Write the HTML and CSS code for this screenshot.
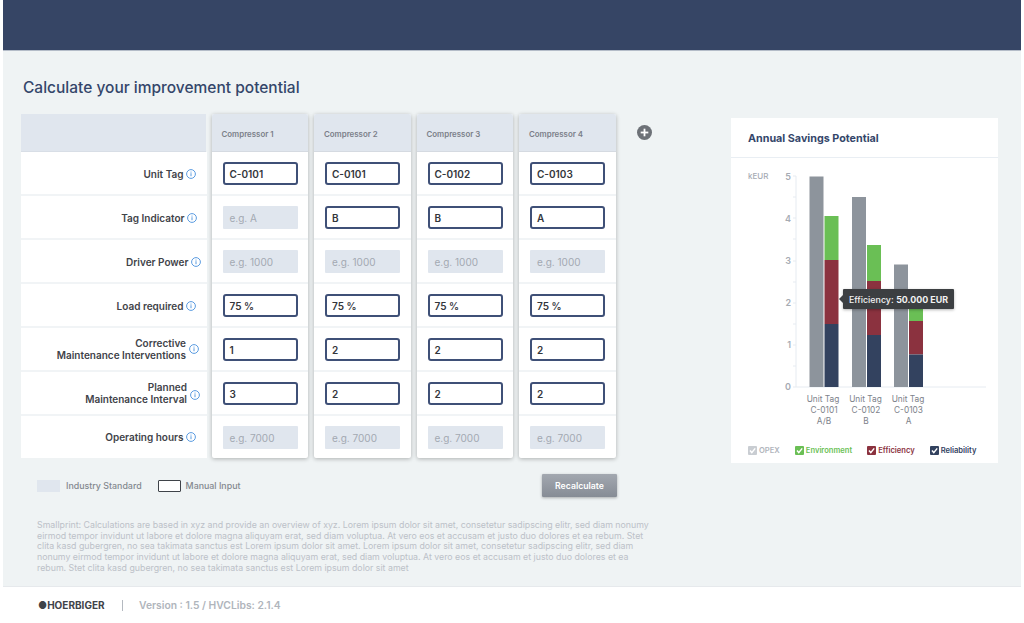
FILE: index.html
```html
<!DOCTYPE html>
<html lang="en">

<head>
  <meta charset="UTF-8">
  <title>Calculate your improvement potential</title>
  <link rel="stylesheet" href="styles.css">
</head>

<body>
  <svg class="defs" width="0" height="0">
    <symbol id="info" viewBox="0 0 10 10">
      <circle cx="5" cy="5" r="4.4" fill="none" stroke="#5a9be0" stroke-width="1" />
      <rect x="4.5" y="4.2" width="1" height="3" fill="#5a9be0" />
      <rect x="4.5" y="2.6" width="1" height="1" fill="#5a9be0" />
    </symbol>
    <symbol id="check" viewBox="0 0 9 9">
      <path d="M2 4.6 L3.8 6.6 L7.2 2.4" fill="none" stroke="#fff" stroke-width="1.5" />
    </symbol>
  </svg>

  <div class="app">
    <header class="topbar"></header>

    <main class="content">
      <h1>Calculate your improvement potential</h1>

      <div class="panels">
        <section class="calculator">
          <div class="table">
            <div class="labels">
              <div class="labels-head"></div>
              <div class="label-row"><span>Unit Tag</span><svg class="info"><use href="#info" /></svg></div>
              <div class="label-row"><span>Tag Indicator</span><svg class="info nudge-1"><use href="#info" /></svg></div>
              <div class="label-row"><span>Driver Power</span><svg class="info nudge-5"><use href="#info" /></svg></div>
              <div class="label-row"><span>Load required</span><svg class="info"><use href="#info" /></svg></div>
              <div class="label-row tall"><span>Corrective<br>Maintenance Interventions</span><svg class="info nudge-2"><use href="#info" /></svg></div>
              <div class="label-row tall"><span>Planned<br>Maintenance Interval</span><svg class="info nudge-3"><use href="#info" /></svg></div>
              <div class="label-row last"><span>Operating hours</span><svg class="info"><use href="#info" /></svg></div>
            </div>

            <div class="compressor">
              <div class="compressor-head">Compressor 1</div>
              <div class="cell"><div class="field">C-0101</div></div>
              <div class="cell"><div class="field standard">e.g. A</div></div>
              <div class="cell"><div class="field standard">e.g. 1000</div></div>
              <div class="cell"><div class="field">75 %</div></div>
              <div class="cell"><div class="field">1</div></div>
              <div class="cell"><div class="field">3</div></div>
              <div class="cell last"><div class="field standard">e.g. 7000</div></div>
            </div>

            <div class="compressor">
              <div class="compressor-head">Compressor 2</div>
              <div class="cell"><div class="field">C-0101</div></div>
              <div class="cell"><div class="field">B</div></div>
              <div class="cell"><div class="field standard">e.g. 1000</div></div>
              <div class="cell"><div class="field">75 %</div></div>
              <div class="cell"><div class="field">2</div></div>
              <div class="cell"><div class="field">2</div></div>
              <div class="cell last"><div class="field standard">e.g. 7000</div></div>
            </div>

            <div class="compressor">
              <div class="compressor-head">Compressor 3</div>
              <div class="cell"><div class="field">C-0102</div></div>
              <div class="cell"><div class="field">B</div></div>
              <div class="cell"><div class="field standard">e.g. 1000</div></div>
              <div class="cell"><div class="field">75 %</div></div>
              <div class="cell"><div class="field">2</div></div>
              <div class="cell"><div class="field">2</div></div>
              <div class="cell last"><div class="field standard">e.g. 7000</div></div>
            </div>

            <div class="compressor">
              <div class="compressor-head">Compressor 4</div>
              <div class="cell"><div class="field">C-0103</div></div>
              <div class="cell"><div class="field">A</div></div>
              <div class="cell"><div class="field standard">e.g. 1000</div></div>
              <div class="cell"><div class="field">75 %</div></div>
              <div class="cell"><div class="field">2</div></div>
              <div class="cell"><div class="field">2</div></div>
              <div class="cell last"><div class="field standard">e.g. 7000</div></div>
            </div>

            <svg class="add" viewBox="0 0 15 15">
              <circle cx="7.5" cy="7.5" r="7.5" fill="#6d7177" />
              <rect x="3.7" y="6.6" width="7.6" height="1.8" fill="#fff" />
              <rect x="6.6" y="3.7" width="1.8" height="7.6" fill="#fff" />
            </svg>
          </div>

          <div class="key-row">
            <div class="key">
              <span class="swatch standard"></span><span class="key-label">Industry Standard</span>
              <span class="swatch manual"></span><span class="key-label">Manual Input</span>
            </div>
            <button class="recalculate">Recalculate</button>
          </div>

          <p class="smallprint">
            Smallprint: Calculations are based in xyz and provide an overview of xyz. Lorem ipsum dolor sit amet, consetetur sadipscing elitr, sed diam nonumy<br>
            eirmod tempor invidunt ut labore et dolore magna aliquyam erat, sed diam voluptua. At vero eos et accusam et justo duo dolores et ea rebum. Stet<br>
            clita kasd gubergren, no sea takimata sanctus est Lorem ipsum dolor sit amet. Lorem ipsum dolor sit amet, consetetur sadipscing elitr, sed diam<br>
            nonumy eirmod tempor invidunt ut labore et dolore magna aliquyam erat, sed diam voluptua. At vero eos et accusam et justo duo dolores et ea<br>
            rebum. Stet clita kasd gubergren, no sea takimata sanctus est Lorem ipsum dolor sit amet
          </p>
        </section>

        <aside class="savings">
          <h2>Annual Savings Potential</h2>

          <!-- viewBox uses the page coordinates of the card -->
          <svg class="chart" viewBox="731 158 267 276">
            <g class="ticks">
              <path d="M796 176 V387 H986" />
              <path d="M793 176 H796 M793 197 H796 M793 218 H796 M793 239 H796 M793 261 H796 M793 282 H796 M793 303 H796 M793 324 H796 M793 345 H796 M793 366 H796 M793 387 H796" />
            </g>

            <text class="unit" x="748" y="179">kEUR</text>
            <g class="axis-num">
              <text x="791" y="179.5">5</text>
              <text x="791" y="221.5">4</text>
              <text x="791" y="264">3</text>
              <text x="791" y="306">2</text>
              <text x="791" y="348">1</text>
              <text x="791" y="390">0</text>
            </g>

            <rect x="809.5" y="176.5" width="14" height="210.5" fill="#8d949c" />
            <rect x="824.5" y="216" width="14" height="44" fill="#6abf55" />
            <rect x="824.5" y="260" width="14" height="64" fill="#8b323f" />
            <rect x="824.5" y="324" width="14" height="63" fill="#33425f" />

            <rect x="852" y="197" width="14" height="190" fill="#8d949c" />
            <rect x="867" y="245" width="14" height="36" fill="#6abf55" />
            <rect x="867" y="281" width="14" height="54" fill="#8b323f" />
            <rect x="867" y="335" width="14" height="52" fill="#33425f" />

            <rect x="894" y="264.5" width="14" height="122.5" fill="#8d949c" />
            <rect x="909" y="300" width="14" height="21" fill="#6abf55" />
            <rect x="909" y="321" width="14" height="33.5" fill="#8b323f" />
            <rect x="909" y="354.5" width="14" height="32.5" fill="#33425f" />

            <g class="category">
              <text x="823" y="402">Unit Tag</text>
              <text x="824" y="413">C-0101</text>
              <text x="824" y="424">A/B</text>
              <text x="865.5" y="402">Unit Tag</text>
              <text x="866" y="413">C-0102</text>
              <text x="866" y="424">B</text>
              <text x="908" y="402">Unit Tag</text>
              <text x="908.5" y="413">C-0103</text>
              <text x="908.5" y="424">A</text>
            </g>
          </svg>

          <div class="legend">
            <span class="legend-item opex"><svg class="box"><use href="#check" /></svg>OPEX</span>
            <span class="legend-item environment"><svg class="box"><use href="#check" /></svg>Environment</span>
            <span class="legend-item efficiency"><svg class="box"><use href="#check" /></svg>Efficiency</span>
            <span class="legend-item reliability"><svg class="box"><use href="#check" /></svg>Reliability</span>
          </div>

          <div class="tooltip">Efficiency: <b>50.000 EUR</b></div>
        </aside>
      </div>
    </main>

    <footer class="footer">
      <span class="brand">&#9679;HOERBIGER</span>
      <span class="divider"></span>
      <span class="version">Version : 1.5 / HVCLibs: 2.1.4</span>
    </footer>
  </div>
</body>

</html>
```

FILE: styles.css
```css
* {
  box-sizing: border-box;
}

body {
  margin: 0;
  background-color: white;
  font-family: Inter, "Liberation Sans", sans-serif;
}

.defs {
  position: absolute;
}

.app {
  margin: 0 3px;
  height: 623px;
  display: flex;
  flex-direction: column;
}

.topbar {
  height: 51px;
  background-color: #364565;
  border-bottom: 1px solid #b4bcc8;
}

.content {
  height: 536px;
  padding: 27px 23px 0 18px;
  background-color: #eff3f4;
  border-bottom: 1px solid #e6e9ec;
}

h1 {
  margin: 0 0 16px 2px;
  height: 20px;
  font-size: 15.5px;
  line-height: 20px;
  font-weight: 500;
  color: #34466a;
}

.panels {
  display: flex;
  justify-content: space-between;
}

.calculator {
  width: 640px;
}

/* table of compressors */
.table {
  display: flex;
  align-items: flex-start;
}

.labels {
  width: 185px;
  margin-right: 5.5px;
}

.labels-head {
  height: 38px;
  background-color: #e0e6ee;
  border-bottom: 1px solid #d8dee6;
}

.label-row {
  width: 186px;
  height: 44px;
  padding: 2px 11px 0 0;
  display: flex;
  align-items: center;
  justify-content: flex-end;
  background-color: white;
  border-bottom: 2px solid #f1f4f6;
  font-size: 10px;
  line-height: 12px;
  font-weight: 600;
  color: #3f4349;
  text-align: right;
}

.label-row.tall {
  padding-top: 0;
  padding-bottom: 1px;
}

.label-row.last {
  height: 42px;
  padding-top: 0;
  border-bottom: 0;
}

.info {
  width: 10px;
  height: 10px;
  margin-left: 2.5px;
  flex-shrink: 0;
}

.info.nudge-1 {
  margin-right: -1px;
}

.info.nudge-2 {
  margin-right: -2.5px;
}

.info.nudge-3 {
  margin-top: 5px;
  margin-right: -3.5px;
}

.info.nudge-5 {
  margin-right: -5px;
}

.compressor {
  width: 96.5px;
  margin-right: 6px;
  background-color: white;
  border-radius: 2px;
  box-shadow: 0 1px 4px rgba(0, 0, 0, 0.28);
}

.compressor-head {
  height: 38px;
  padding-left: 10px;
  padding-top: 2px;
  display: flex;
  align-items: center;
  background-color: #e0e6ee;
  border-bottom: 1px solid #d5dae1;
  border-radius: 2px 2px 0 0;
  font-size: 7.9px;
  font-weight: 600;
  color: #7b8089;
}

.cell {
  height: 44px;
  padding: 10px 0 0 11px;
  border-bottom: 2px solid #f1f4f6;
}

.cell.last {
  height: 42px;
  border-bottom: 0;
}

.field {
  width: 75px;
  height: 23px;
  padding-left: 5px;
  display: flex;
  align-items: center;
  background-color: white;
  border: 2px solid #3f5077;
  border-radius: 3px;
  font-size: 10px;
  font-weight: 600;
  color: #33363b;
}

.field.standard {
  padding-left: 7px;
  background-color: #e0e6ee;
  border: 0;
  border-radius: 1px;
  font-weight: 400;
  color: #a3a9b2;
}

.add {
  width: 15px;
  height: 15px;
  margin: 11px 0 0 15.5px;
}

/* legend and button under the table */
.key-row {
  margin-top: 16px;
  display: flex;
  justify-content: space-between;
  align-items: center;
  width: 596px;
}

.key {
  padding-left: 16px;
  display: flex;
  align-items: center;
}

.swatch {
  width: 23px;
  height: 12px;
  margin-right: 6px;
}

.swatch.standard {
  background-color: #e0e6ee;
}

.swatch.manual {
  margin-right: 5px;
  background-color: white;
  border: 1px solid #3f4349;
  border-radius: 1px;
}

.key-label {
  margin-right: 16px;
  font-size: 8.85px;
  font-weight: 500;
  color: #83888f;
}

.recalculate {
  width: 75px;
  height: 23px;
  padding: 0;
  border: 0;
  border-radius: 1px;
  background: linear-gradient(#a3a8b0, #868c95);
  box-shadow: 0 1px 3px rgba(0, 0, 0, 0.3);
  font-family: inherit;
  font-size: 8.7px;
  font-weight: 600;
  color: white;
}

.smallprint {
  margin: 23px 0 0 16px;
  width: 630px;
  font-size: 8.8px;
  line-height: 10.7px;
  color: #bcc1c8;
  white-space: nowrap;
}

/* savings card */
.savings {
  position: relative;
  width: 267px;
  height: 345px;
  margin-top: 4px;
  background-color: white;
}

h2 {
  margin: 0;
  height: 40px;
  padding: 14px 0 0 17px;
  font-size: 10.75px;
  line-height: 13px;
  font-weight: 700;
  color: #34466a;
  border-bottom: 1px solid #e9eef3;
}

.chart {
  display: block;
  width: 267px;
  height: 276px;
  font-family: Inter, "Liberation Sans", sans-serif;
}

.ticks path {
  fill: none;
  stroke: #e6ebf1;
  stroke-width: 1;
}

.unit {
  font-size: 8px;
  font-weight: 500;
  fill: #a6abb3;
}

.axis-num text {
  font-size: 9px;
  font-weight: 600;
  fill: #a6abb3;
  text-anchor: end;
}

.category text {
  font-size: 8.3px;
  fill: #7d828a;
  text-anchor: middle;
}

.legend {
  padding: 12px 0 0 17px;
  display: flex;
  gap: 15px;
}

.legend-item {
  display: flex;
  align-items: center;
  gap: 2px;
  font-size: 7.6px;
  line-height: 9px;
  font-weight: 600;
}

.box {
  width: 9px;
  height: 9px;
  border-radius: 1px;
}

.opex {
  color: #b0b5bc;
}

.opex .box {
  background-color: #c9cdd2;
}

.environment {
  color: #6abf55;
}

.environment .box {
  background-color: #6abf55;
}

.efficiency {
  color: #8b323f;
}

.efficiency .box {
  background-color: #8b323f;
}

.reliability {
  color: #33425f;
}

.reliability .box {
  background-color: #33425f;
}

.tooltip {
  position: absolute;
  left: 112px;
  top: 171px;
  width: 111px;
  height: 20px;
  display: flex;
  align-items: center;
  justify-content: center;
  gap: 2.5px;
  background-color: #3c3f42;
  border-radius: 1px;
  box-shadow: 0 1px 3px rgba(0, 0, 0, 0.3);
  font-size: 8.9px;
  font-weight: 500;
  color: #f2f2f2;
  white-space: nowrap;
}

.tooltip b {
  font-weight: 700;
}

.tooltip::before {
  content: "";
  position: absolute;
  left: -4px;
  top: 6px;
  border-top: 4px solid transparent;
  border-bottom: 4px solid transparent;
  border-right: 4px solid #3c3f42;
}

/* footer */
.footer {
  flex: 1;
  padding-left: 35px;
  display: flex;
  align-items: center;
  background-color: white;
}

.brand {
  width: 84px;
  font-size: 10px;
  font-weight: 700;
  color: #3f4349;
}

.divider {
  width: 1px;
  height: 11px;
  background-color: #b4b9c0;
  margin-right: 16px;
}

.version {
  font-size: 10.3px;
  font-weight: 600;
  color: #b0b5bc;
}
```
